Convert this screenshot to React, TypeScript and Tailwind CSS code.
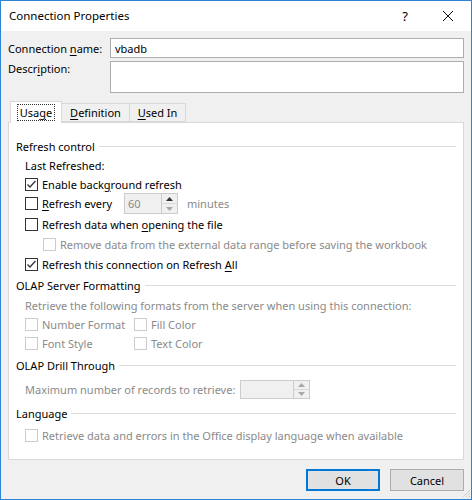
import React from 'react';

// ─── Small pieces ─────────────────────────────────────────────────────────────

const U: React.FC<{ children: React.ReactNode }> = ({ children }) => (
    <span className="underline decoration-1 underline-offset-[2px]">{children}</span>
);

function Checkbox({ checked = false, disabled = false }: { checked?: boolean; disabled?: boolean }) {
    return (
        <span
            className={`w-[13px] h-[13px] flex-shrink-0 border bg-white flex items-center justify-center ${disabled ? 'border-[#cccccc]' : 'border-[#333333]'}`}
        >
            {checked && (
                <svg width="11" height="11" viewBox="0 0 11 11">
                    <path d="M1.5 5.5 L4 8 L9.5 2" fill="none" stroke="#333" strokeWidth="1.3" />
                </svg>
            )}
        </span>
    );
}

function SpinArrows({ disabled = false }: { disabled?: boolean }) {
    const c = disabled ? '#a8a8a8' : '#333';
    return (
        <div className="w-[16px] h-full flex flex-col border-l border-[#cccccc]">
            <div className="flex-1 flex items-center justify-center bg-[#f0f0f0] border-b border-[#d9d9d9]">
                <svg width="7" height="4" viewBox="0 0 7 4"><path d="M0 4 L3.5 0 L7 4 Z" fill={c} /></svg>
            </div>
            <div className="flex-1 flex items-center justify-center bg-[#f0f0f0]">
                <svg width="7" height="4" viewBox="0 0 7 4"><path d="M0 0 L3.5 4 L7 0 Z" fill="#a8a8a8" /></svg>
            </div>
        </div>
    );
}

function Section({ title, h }: { title: string; h: string }) {
    return (
        <div className={`flex items-center ${h}`}>
            <span>{title}</span>
            <div className="flex-1 h-px bg-[#dcdcdc] ml-[4px]" />
        </div>
    );
}

// ─── Component ────────────────────────────────────────────────────────────────

export default function App() {
    return (
        <div className="w-[472px] h-[500px] border border-[#2f83d4] bg-[#f0f0f0] flex flex-col font-['Noto_Sans',sans-serif] text-[11px] leading-none text-black whitespace-nowrap overflow-hidden">
            {/* Title bar */}
            <div className="h-[30px] bg-white flex items-center pl-[8px] flex-shrink-0">
                <span className="flex-1 text-[11.5px]">Connection Properties</span>
                <span className="w-[20px] text-center text-[13px] mr-[27px]">?</span>
                <svg width="12" height="12" viewBox="0 0 12 12" className="mr-[17px]">
                    <path d="M1 1 L11 11 M11 1 L1 11" stroke="#111" strokeWidth="1" />
                </svg>
            </div>

            {/* Body */}
            <div className="flex-1 flex flex-col px-[7px] pt-[7px]">
                <div className="flex items-center h-[20px]">
                    <span className="w-[102px]">Connection <U>n</U>ame:</span>
                    <div className="flex-1 h-[20px] border border-[#adadad] bg-white flex items-center px-[4px]">vbadb</div>
                </div>
                <div className="flex mt-[3px]">
                    <span className="w-[102px] pt-[2px]">Descr<U>i</U>ption:</span>
                    <div className="flex-1 h-[32px] border border-[#adadad] bg-white" />
                </div>

                {/* Tabs */}
                <div className="flex items-end mt-[8px] pl-[2px] h-[21px]">
                    <div className="relative z-10 h-[22px] w-[52px] bg-white border border-[#d9d9d9] border-b-0 -mb-px flex items-center justify-center">
                        <span className="border border-dotted border-[#333] px-[2px] py-[2px]">Usa<U>g</U>e</span>
                    </div>
                    <div className="h-[19px] w-[68px] border border-[#d9d9d9] border-l-0 flex items-center justify-center">
                        <span><U>D</U>efinition</span>
                    </div>
                    <div className="h-[19px] w-[56px] border border-[#d9d9d9] border-l-0 flex items-center justify-center">
                        <span><U>U</U>sed In</span>
                    </div>
                </div>

                {/* Panel */}
                <div className="h-[338px] bg-white border border-[#d9d9d9] flex flex-col pl-[7px] pr-[7px] pt-[13px]">
                    <Section title="Refresh control" h="h-[20px]" />
                    <div className="flex flex-col pl-[9px]">
                        <div className="h-[19px] flex items-center">Last Refreshed:</div>
                        <div className="h-[18px] flex items-center gap-[4px]">
                            <Checkbox checked />
                            <span>Enable back<U>g</U>round refresh</span>
                        </div>
                        <div className="h-[21px] flex items-center">
                            <Checkbox />
                            <span className="ml-[4px] w-[82px]"><U>R</U>efresh every</span>
                            <div className="w-[54px] h-[21px] border border-[#cccccc] bg-[#f0f0f0] flex items-center">
                                <span className="flex-1 pl-[3px] text-[#8a8a8a]">60</span>
                                <SpinArrows />
                            </div>
                            <span className="ml-[9px] text-[#8a8a8a]">minutes</span>
                        </div>
                        <div className="h-[21px] flex items-center gap-[4px]">
                            <Checkbox />
                            <span>Refresh data when <U>o</U>pening the file</span>
                        </div>
                        <div className="h-[19px] flex items-center gap-[4px] pl-[18px] text-[#8a8a8a]">
                            <Checkbox disabled />
                            <span>Remove data from the external data range before saving the workbook</span>
                        </div>
                        <div className="h-[21px] flex items-center gap-[4px]">
                            <Checkbox checked />
                            <span>Refresh this connection on Refresh <U>A</U>ll</span>
                        </div>
                    </div>

                    <Section title="OLAP Server Formatting" h="h-[21px]" />
                    <div className="flex flex-col pl-[9px] text-[#8a8a8a]">
                        <div className="h-[19px] flex items-center">Retrieve the following formats from the server when using this connection:</div>
                        <div className="h-[18px] flex items-center">
                            <div className="w-[109px] flex items-center gap-[4px]"><Checkbox disabled /><span>Number Format</span></div>
                            <div className="flex items-center gap-[4px]"><Checkbox disabled /><span>Fill Color</span></div>
                        </div>
                        <div className="h-[21px] flex items-center">
                            <div className="w-[109px] flex items-center gap-[4px]"><Checkbox disabled /><span>Font Style</span></div>
                            <div className="flex items-center gap-[4px]"><Checkbox disabled /><span>Text Color</span></div>
                        </div>
                    </div>

                    <Section title="OLAP Drill Through" h="h-[23px]" />
                    <div className="h-[25px] flex items-center pl-[9px] text-[#8a8a8a]">
                        <span className="w-[215px]">Maximum number of records to retrieve:</span>
                        <div className="w-[70px] h-[19px] border border-[#cccccc] bg-[#f0f0f0] flex justify-end">
                            <SpinArrows disabled />
                        </div>
                    </div>

                    <Section title="Language" h="h-[22px]" />
                    <div className="h-[22px] flex items-center gap-[4px] pl-[9px] text-[#8a8a8a]">
                        <Checkbox disabled />
                        <span>Retrieve data and errors in the Office display language when available</span>
                    </div>
                </div>

                {/* Buttons */}
                <div className="flex justify-end gap-[10px] mt-[9px] relative">
                    <button className="w-[74px] h-[22px] bg-[#e1e1e1] border-2 border-[#0078d7] flex items-center justify-center">OK</button>
                    <button className="w-[74px] h-[22px] bg-[#e1e1e1] border border-[#adadad] flex items-center justify-center">Cancel</button>
                    <svg width="10" height="10" viewBox="0 0 10 10" className="absolute right-[-7px] top-[19px]">
                        <path d="M9 2 L2 9 M9 5 L5 9 M9 8 L8 9" stroke="#b0b0b0" strokeWidth="1" strokeDasharray="1 1" />
                    </svg>
                </div>
            </div>
        </div>
    );
}
